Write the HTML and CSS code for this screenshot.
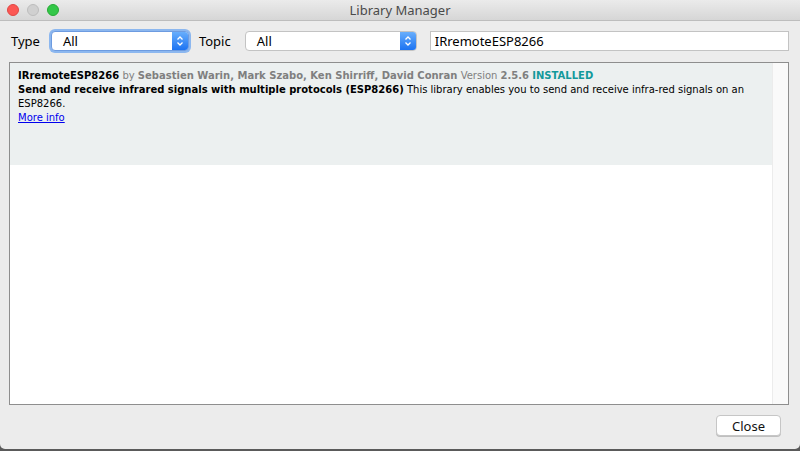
FILE: index.html
```html
<!DOCTYPE html>
<html>
<head>
<meta charset="utf-8">
<link rel="stylesheet" href="styles.css">
</head>
<body>
<div class="window">
  <div class="titlebar">
    <div class="lights">
      <span class="light red"></span>
      <span class="light gray"></span>
      <span class="light green"></span>
    </div>
    <div class="title">Library Manager</div>
    <div></div>
  </div>
  <div class="toolbar">
    <span class="label">Type</span>
    <div class="select focused">
      <span class="sel-text">All</span>
      <span class="sel-arrow"><svg width="8" height="12" viewBox="0 0 8 12"><path d="M1.5 4.5 L4 2 L6.5 4.5 M1.5 7.5 L4 10 L6.5 7.5" fill="none" stroke="#fff" stroke-width="1.3"/></svg></span>
    </div>
    <span class="label topic">Topic</span>
    <div class="select wide">
      <span class="sel-text">All</span>
      <span class="sel-arrow"><svg width="8" height="12" viewBox="0 0 8 12"><path d="M1.5 4.5 L4 2 L6.5 4.5 M1.5 7.5 L4 10 L6.5 7.5" fill="none" stroke="#fff" stroke-width="1.3"/></svg></span>
    </div>
    <div class="search">IRremoteESP8266</div>
  </div>
  <div class="list">
    <div class="list-body">
      <div class="item">
        <div class="line"><b>IRremoteESP8266</b> <span class="muted">by</span> <b class="muted">Sebastien Warin, Mark Szabo, Ken Shirriff, David Conran</b> <span class="muted">Version</span> <b class="muted">2.5.6</b> <b class="installed">INSTALLED</b></div>
        <div class="line"><b>Send and receive infrared signals with multiple protocols (ESP8266)</b> This library enables you to send and receive infra-red signals on an</div>
        <div class="line">ESP8266.</div>
        <div class="line"><a href="#" class="more">More info</a></div>
      </div>
    </div>
    <div class="scrollbar"></div>
  </div>
  <div class="footer">
    <button class="close">Close</button>
  </div>
</div>
</body>
</html>
```
FILE: styles.css
```css
* { box-sizing: border-box; }
html, body { margin: 0; padding: 0; background: #5a5a5a; }
body { width: 800px; height: 451px; overflow: hidden; }
.window {
  width: 800px; height: 449px;
  background: #ececec;
  display: flex; flex-direction: column;
  border-radius: 0 0 5px 5px;
  overflow: hidden;
  font-family: "Noto Sans", "DejaVu Sans", sans-serif;
}
.titlebar {
  height: 21px;
  display: grid; grid-template-columns: 1fr auto 1fr; align-items: center;
  background: linear-gradient(#ebebeb, #d6d6d6);
  border-bottom: 1px solid #bdbdbd;
  flex: none;
}
.lights { display: flex; gap: 8px; padding-left: 7px; }
.light { width: 12px; height: 12px; border-radius: 50%; display: block; }
.red { background: #fc5753; border: 1px solid #df4744; }
.gray { background: #d0d0d0; border: 1px solid #bdbdbd; }
.green { background: #33c748; border: 1px solid #27aa35; }
.title { font-size: 13px; color: #4a4a4a; line-height: 20px; }
.toolbar {
  display: flex; align-items: center;
  height: 39px; padding: 0 11px 0 11px; flex: none;
  font-size: 13px; color: #000;
}
.label { margin-right: 11px; }
.topic { margin-left: 10px; margin-right: 14px; }
.select {
  height: 20px; width: 138px;
  display: flex; align-items: stretch;
  background: #fff;
  border: 1px solid #c3c3c3;
  border-radius: 4px;
  overflow: hidden;
}
.select.focused {
  box-shadow: 0 0 0 2px #8cb7ef;
  border-color: #6d9be0;
}
.select.wide { width: 172px; }
.sel-text { flex: 1; padding-left: 11px; line-height: 18px; }
.sel-arrow {
  width: 16px;
  background: linear-gradient(#68aefc, #1c73f2);
  display: flex; align-items: center; justify-content: center;
}
.search {
  margin-left: 13px;
  width: 359px; height: 20px;
  background: #fff;
  border: 1px solid #c3c3c3;
  padding-left: 4px; line-height: 18px;
}
.list {
  margin: 2px 11px 0 9px;
  height: 343px; flex: none;
  border: 1px solid #8e8e8e;
  background: #fff;
  display: flex;
}
.list-body { flex: 1; }
.scrollbar {
  width: 16px; background: #fafafa; border-left: 1px solid #ececec;
}
.item {
  height: 102px;
  background: #ecf0f0;
  padding: 6px 8px 0 8px;
  font-family: "DejaVu Sans", Verdana, sans-serif;
  font-size: 10px; line-height: 14px; color: #000;
}
.line { white-space: nowrap; }
.muted { color: #7f7f7f; }
.installed { color: #13999b; }
.more { color: #0000ee; }
.footer {
  flex: 1;
  display: flex; justify-content: flex-end; align-items: flex-start;
  padding: 10px 19px 0 0;
}
.close {
  width: 65px; height: 21px;
  background: #fff;
  border: 1px solid #c6c6c6;
  border-radius: 4px;
  font-family: "Noto Sans", "DejaVu Sans", sans-serif;
  font-size: 13px; color: #111;
  padding: 0;
  box-shadow: 0 1px 0 #bfbfbf;
}
```
